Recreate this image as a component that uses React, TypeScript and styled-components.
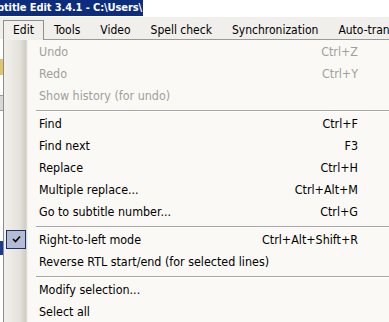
import React from 'react';
import styled, { createGlobalStyle } from 'styled-components';

const GlobalStyle = createGlobalStyle`
  html, body {
    margin: 0;
    padding: 0;
    background: #ffffff;
    overflow: hidden;
  }
  body {
    font-family: 'DejaVu Sans Condensed', 'DejaVu Sans', 'Liberation Sans', sans-serif;
    font-size: 12.4px;
  }
`;

const Window = styled.div`
  width: 389px;
  height: 322px;
  display: flex;
  flex-direction: column;
  overflow: hidden;
`;

const TitleRow = styled.div`
  height: 17px;
  flex-shrink: 0;
  display: flex;
  background: #ffffff;
`;

const Caption = styled.div`
  width: 143px;
  height: 16px;
  background: #0c2c7e;
  color: #ffffff;
  font-family: 'DejaVu Sans Condensed', 'DejaVu Sans', sans-serif;
  font-weight: bold;
  font-size: 11px;
  letter-spacing: -0.1px;
  line-height: 15px;
  white-space: nowrap;
  overflow: hidden;
`;

const CaptionText = styled.span`
  display: inline-block;
  margin-left: -3px;
`;

const MenuBar = styled.div`
  height: 22px;
  flex-shrink: 0;
  display: flex;
  align-items: flex-end;
  padding-left: 3px;
  background: #f0efeb;
  font-size: 12px;
`;

const BarItem = styled.div<{ $open?: boolean }>`
  height: ${(p) => (p.$open ? '20px' : '19px')};
  line-height: 18px;
  padding: 0 9px;
  color: #000000;
  white-space: nowrap;
  box-sizing: border-box;
  border: 1px solid ${(p) => (p.$open ? '#8f8f8f' : 'transparent')};
  border-bottom: none;
  margin-bottom: ${(p) => (p.$open ? '-1px' : '0')};
  position: relative;
  z-index: ${(p) => (p.$open ? 1 : 0)};
  background: ${(p) => (p.$open ? '#f0efeb' : 'transparent')};
`;

const Body = styled.div`
  flex: 1;
  display: flex;
  min-height: 0;
`;

const AppEdge = styled.div`
  width: 3px;
  flex-shrink: 0;
  display: flex;
  flex-direction: column;
  background: #ffffff;
`;

const EdgeBit = styled.div<{ $h: number; $c: string }>`
  height: ${(p) => p.$h}px;
  background: ${(p) => p.$c};
  flex-shrink: 0;
`;

const Menu = styled.div`
  flex: 1;
  display: flex;
  flex-direction: column;
  border-top: 1px solid #9a9a9a;
  border-left: 1px solid #8c8c8c;
  background: linear-gradient(
    to right,
    #f1f0ec 0px,
    #e4e2da 16px,
    #cfccc2 22px,
    #e9e7e1 23px,
    #faf9f6 24px,
    #faf9f6 100%
  );
`;

const Row = styled.div<{ $disabled?: boolean }>`
  height: 22px;
  display: flex;
  align-items: center;
  color: ${(p) => (p.$disabled ? '#a09f9c' : '#000000')};
  white-space: nowrap;
  flex-shrink: 0;
`;

const Gutter = styled.div`
  width: 24px;
  height: 100%;
  display: flex;
  align-items: center;
  justify-content: center;
  flex-shrink: 0;
`;

const CheckBox = styled.div`
  width: 18px;
  height: 17px;
  border: 1px solid #1e2f6a;
  background: #b4bcd4;
  display: flex;
  align-items: center;
  justify-content: center;
`;

const Label = styled.span`
  flex: 1;
  padding-left: 11px;
`;

const Shortcut = styled.span`
  padding-right: 31px;
  padding-left: 20px;
`;

const Separator = styled.div`
  height: 6px;
  box-sizing: border-box;
  padding: 4px 0 0 32px;
  flex-shrink: 0;
`;

const SepLine = styled.div`
  height: 1px;
  background: #a7a7a5;
  border-bottom: 1px solid #ffffff;
`;

type Item = { label: string; key?: string; disabled?: boolean; checked?: boolean } | 'sep';

const items: Item[] = [
  { label: 'Undo', key: 'Ctrl+Z', disabled: true },
  { label: 'Redo', key: 'Ctrl+Y', disabled: true },
  { label: 'Show history (for undo)', disabled: true },
  'sep',
  { label: 'Find', key: 'Ctrl+F' },
  { label: 'Find next', key: 'F3' },
  { label: 'Replace', key: 'Ctrl+H' },
  { label: 'Multiple replace...', key: 'Ctrl+Alt+M' },
  { label: 'Go to subtitle number...', key: 'Ctrl+G' },
  'sep',
  { label: 'Right-to-left mode', key: 'Ctrl+Alt+Shift+R', checked: true },
  { label: 'Reverse RTL start/end (for selected lines)' },
  'sep',
  { label: 'Modify selection...' },
  { label: 'Select all' },
];

const menus = ['Edit', 'Tools', 'Video', 'Spell check', 'Synchronization', 'Auto-translate'];

const Check = () => (
  <svg width="9" height="8" viewBox="0 0 9 8">
    <path d="M1 4 L3.5 6.5 L8 1.5" fill="none" stroke="#000" strokeWidth="1.6" />
  </svg>
);

export default function App() {
  return (
    <Window>
      <GlobalStyle />
      <TitleRow>
        <Caption>
          <CaptionText>btitle Edit 3.4.1 - C:\Users\</CaptionText>
        </Caption>
      </TitleRow>
      <MenuBar>
        {menus.map((m, i) => (
          <BarItem key={m} $open={i === 0}>
            {m}
          </BarItem>
        ))}
      </MenuBar>
      <Body>
        <AppEdge>
          <EdgeBit $h={20} $c="#ffffff" />
          <EdgeBit $h={16} $c="#e2c36e" />
          <EdgeBit $h={20} $c="#ffffff" />
          <EdgeBit $h={1} $c="#9a9a9a" />
          <EdgeBit $h={14} $c="#d8d8d8" />
          <EdgeBit $h={1} $c="#9a9a9a" />
          <EdgeBit $h={130} $c="#ffffff" />
          <EdgeBit $h={14} $c="#1d3b8e" />
          <EdgeBit $h={70} $c="#ffffff" />
        </AppEdge>
        <Menu>
          {items.map((it, i) =>
            it === 'sep' ? (
              <Separator key={i}>
                <SepLine />
              </Separator>
            ) : (
              <Row key={i} $disabled={it.disabled}>
                <Gutter>
                  {it.checked && (
                    <CheckBox>
                      <Check />
                    </CheckBox>
                  )}
                </Gutter>
                <Label>{it.label}</Label>
                {it.key && <Shortcut>{it.key}</Shortcut>}
              </Row>
            )
          )}
        </Menu>
      </Body>
    </Window>
  );
}
